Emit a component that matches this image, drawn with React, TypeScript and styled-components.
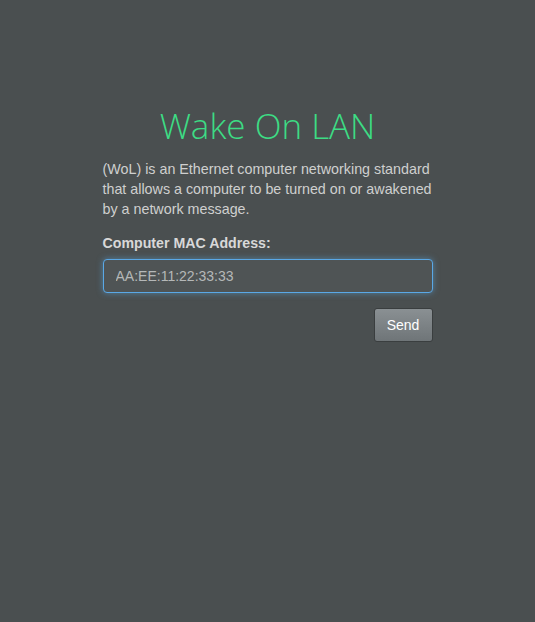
import React from "react";
import styled, { createGlobalStyle } from "styled-components";

const Global = createGlobalStyle`
  html, body { margin: 0; padding: 0; background: #4a4f50; }
  body { font-family: "Liberation Sans", Arial, sans-serif; }
`;

const Page = styled.div`
  min-height: 622px;
  display: flex;
  justify-content: center;
  padding-top: 104px;
  box-sizing: border-box;
`;

const Column = styled.div`
  width: 330px;
  display: flex;
  flex-direction: column;
`;

const Title = styled.h1`
  margin: 0;
  text-align: center;
  font-family: "Open Sans", sans-serif;
  font-weight: 300;
  font-size: 35px;
  line-height: 44px;
  color: #3ddc84;
`;

const Desc = styled.p`
  margin: 11px 0 0;
  font-size: 14.3px;
  line-height: 20px;
  color: #cfcfcf;
`;

const Label = styled.label`
  margin-top: 16px;
  font-size: 14.2px;
  font-weight: bold;
  color: #d8d8d8;
`;

const Input = styled.input`
  margin-top: 8px;
  height: 34px;
  box-sizing: border-box;
  border: 1px solid #5aa8e6;
  border-radius: 4px;
  background: #4f5455;
  box-shadow: 0 0 6px rgba(90, 170, 230, 0.55);
  padding: 0 12px;
  font-family: "Liberation Sans", Arial, sans-serif;
  font-size: 14px;
  color: #b5b8b8;
  outline: none;
`;

const Actions = styled.div`
  margin-top: 15px;
  display: flex;
  justify-content: flex-end;
`;

const Button = styled.button`
  width: 59px;
  height: 34px;
  border: 1px solid #3a3e3f;
  border-radius: 3px;
  background: linear-gradient(#8a9093, #6f7578);
  color: #fff;
  font-family: "Liberation Sans", Arial, sans-serif;
  font-size: 14px;
`;

export default function App() {
  return (
    <>
      <Global />
      <Page>
        <Column>
          <Title>Wake On LAN</Title>
          <Desc>
            (WoL) is an Ethernet computer networking standard that allows a computer to be turned on or awakened by a network message.
          </Desc>
          <Label>Computer MAC Address:</Label>
          <Input defaultValue="AA:EE:11:22:33:33" />
          <Actions>
            <Button>Send</Button>
          </Actions>
        </Column>
      </Page>
    </>
  );
}
